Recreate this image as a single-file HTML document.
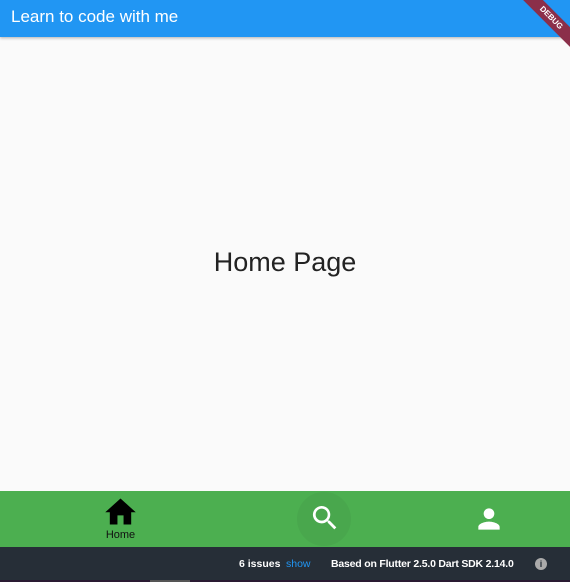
<!DOCTYPE html><html><head><style>
body{margin:0;width:570px;height:582px;position:relative;overflow:hidden;background:#fafafa;font-family:"Liberation Sans",Roboto,sans-serif}
.top{position:absolute;left:0;top:0;width:570px;height:37px;background:#2196f3;box-shadow:0 1px 3px rgba(0,0,0,.3)}
.top span{position:absolute;left:11px;top:7px;color:#fff;font-size:17px}
.rib{position:absolute;right:-24px;top:11px;width:86px;height:14px;background:#8b2f4a;transform:rotate(45deg);color:#fff;font-size:8px;font-weight:bold;text-align:center;line-height:14px}
.mid{position:absolute;left:0;width:570px;top:247px;text-align:center;font-size:27px;color:#222}
.nav{position:absolute;left:0;top:491px;width:570px;height:56px;background:#4caf50}
.circ{position:absolute;left:297px;top:1px;width:54px;height:54px;border-radius:50%;background:#49a74d}
.dev{position:absolute;left:0;top:547px;width:570px;height:33px;background:#262e37;color:#fff;font-size:10.5px;font-weight:bold}
.bot{position:absolute;left:0;top:580px;width:570px;height:2px;background:#2a1a33}
</style></head><body>
<div class="top"><span>Learn to code with me</span><div class="rib">DEBUG</div></div>
<div class="mid">Home Page</div>
<div class="nav">
<svg style="position:absolute;left:105px;top:6px" width="31" height="29" viewBox="2 2 20 19"><path d="M10 20v-6h4v6h5v-8h3L12 3 2 12h3v8z" fill="#000"/></svg>
<div style="position:absolute;left:0;width:241px;top:38px;text-align:center;font-size:11px;color:#111">Home</div>
<div class="circ"></div>
<svg style="position:absolute;left:309px;top:11px" width="32" height="32" viewBox="0 0 24 24"><path d="M15.5 14h-.8l-.3-.3A6.5 6.5 0 1 0 9.5 16a6.5 6.5 0 0 0 4.2-1.6l.3.3v.8l5 5 1.5-1.5-5-5zm-6 0a4.5 4.5 0 1 1 0-9 4.5 4.5 0 0 1 0 9z" fill="#fff"/></svg>
<svg style="position:absolute;left:473px;top:12px" width="32" height="32" viewBox="0 0 24 24"><path d="M12 12a4 4 0 1 0 0-8 4 4 0 0 0 0 8zm0 2c-2.7 0-8 1.3-8 4v2h16v-2c0-2.7-5.3-4-8-4z" fill="#fff"/></svg>
</div>
<div class="dev">
<span style="position:absolute;left:239px;top:11px">6 issues</span>
<span style="position:absolute;left:286px;top:11px;color:#2196f3;font-weight:normal">show</span>
<span style="position:absolute;left:331px;top:11px;letter-spacing:-0.2px">Based on Flutter 2.5.0 Dart SDK 2.14.0</span>
<span style="position:absolute;left:535px;top:11px;width:12px;height:12px;border-radius:50%;background:#aaa;color:#262e37;font-size:9px;text-align:center;line-height:12px">i</span>
</div>
<div class="bot"><div style="position:absolute;left:150px;width:40px;height:2px;background:#555"></div></div>
</body></html>
